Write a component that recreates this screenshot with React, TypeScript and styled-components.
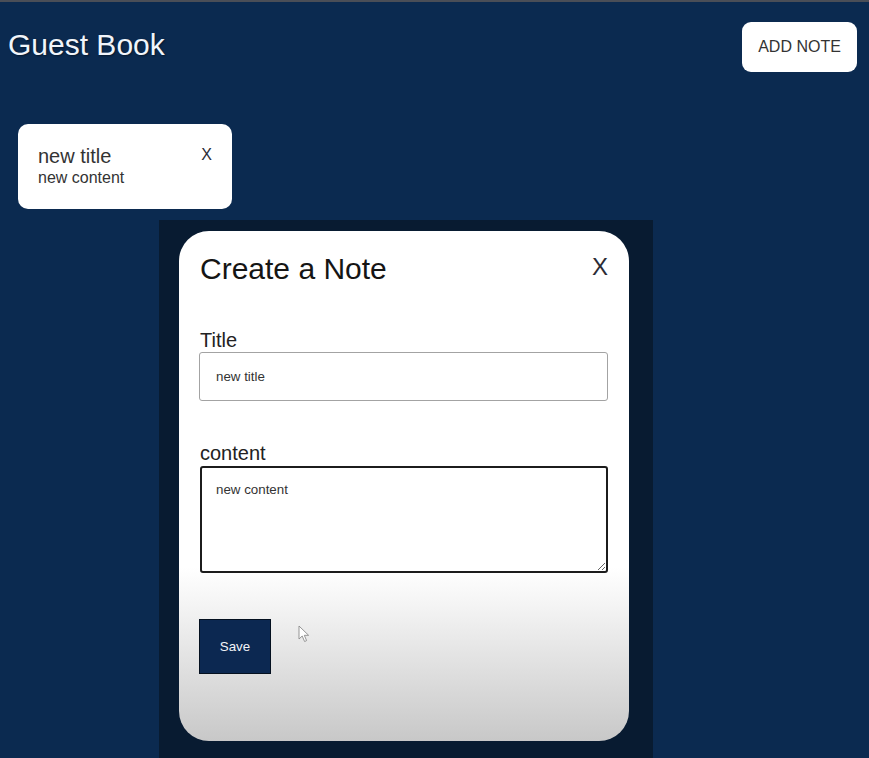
import React from "react";
import styled, { createGlobalStyle } from "styled-components";

const GlobalStyle = createGlobalStyle`
  html, body {
    margin: 0;
    padding: 0;
    background: #0b2a50;
    font-family: "Liberation Sans", Arial, sans-serif;
  }
  * { box-sizing: border-box; }
`;

const Page = styled.div`
  width: 869px;
  height: 758px;
  overflow: hidden;
  background: #0b2a50;
  display: flex;
  flex-direction: column;
`;

const TopBar = styled.div`
  height: 2px;
  background: #4a4e57;
  flex: none;
`;

const Header = styled.header`
  display: flex;
  justify-content: space-between;
  align-items: flex-start;
  padding: 20px 12px 0 8px;
`;

const Title = styled.h1`
  margin: 5px 0 0;
  font-size: 30px;
  line-height: 36px;
  font-weight: 400;
  color: #f1f5fb;
  text-shadow: 1px 1px 2px rgba(0, 0, 0, 0.45);
`;

const AddButton = styled.button`
  width: 115px;
  height: 50px;
  border: none;
  border-radius: 9px;
  background: #ffffff;
  color: #333333;
  font-family: "Liberation Sans", Arial, sans-serif;
  font-size: 16px;
  padding: 0;
  cursor: pointer;
`;

const NoteList = styled.section`
  display: flex;
  gap: 16px;
  margin-top: 52px;
  padding-left: 18px;
`;

const NoteCard = styled.article`
  width: 214px;
  height: 85px;
  background: #ffffff;
  border-radius: 10px;
  padding: 20px 20px 0 20px;
  display: flex;
  justify-content: space-between;
  align-items: flex-start;
  color: #333333;
`;

const NoteText = styled.div`
  display: flex;
  flex-direction: column;
`;

const NoteTitle = styled.div`
  font-size: 20px;
  line-height: 24px;
`;

const NoteBody = styled.div`
  font-size: 16px;
  line-height: 18px;
  margin-top: 1px;
`;

const CloseText = styled.span<{ $size: number; $lh: number; $offset?: number }>`
  font-size: ${(p) => p.$size}px;
  line-height: ${(p) => p.$lh}px;
  margin-top: ${(p) => p.$offset ?? 0}px;
  color: #2b2b35;
  cursor: pointer;
`;

const Backdrop = styled.div`
  margin: 11px 0 0 159px;
  width: 494px;
  height: 538px;
  background: #081b31;
  padding: 11px 24px 0 20px;
`;

const Modal = styled.div`
  position: relative;
  width: 450px;
  height: 510px;
  border-radius: 30px;
  background: linear-gradient(180deg, #ffffff 0%, #ffffff 66%, #f3f3f3 74%, #c8c8c8 100%);
  padding: 20px 21px 0 21px;
  display: flex;
  flex-direction: column;
`;

const ModalHeader = styled.div`
  display: flex;
  justify-content: space-between;
  align-items: flex-start;
`;

const ModalTitle = styled.h2`
  margin: 0;
  font-size: 30px;
  line-height: 36px;
  font-weight: 400;
  color: #151515;
`;

const FieldLabel = styled.label<{ $gap: number }>`
  display: block;
  margin-top: ${(p) => p.$gap}px;
  font-size: 20px;
  line-height: 24px;
  color: #222222;
`;

const TextInput = styled.input`
  display: block;
  width: 409px;
  height: 49px;
  margin-left: -1px;
  border: 1px solid #a3a3a3;
  border-radius: 3px;
  padding: 0 16px;
  font-family: "Liberation Sans", Arial, sans-serif;
  font-size: 13.333px;
  color: #333333;
  background: #ffffff;
  outline: none;
`;

const TextArea = styled.textarea`
  display: block;
  width: 408px;
  height: 107px;
  margin-top: 1px;
  border: 2px solid #1c1c1c;
  border-radius: 3px;
  padding: 14px 14px;
  font-family: "Liberation Sans", Arial, sans-serif;
  font-size: 13.333px;
  color: #333333;
  background: #ffffff;
  outline: none;
  resize: vertical;
`;

const SaveButton = styled.button`
  margin-top: 46px;
  margin-left: -1px;
  width: 72px;
  height: 55px;
  background: #0c2851;
  border: 1px solid #04101f;
  color: #f2f4f8;
  font-family: "Liberation Sans", Arial, sans-serif;
  font-size: 13.333px;
  padding: 0;
  cursor: pointer;
`;

const Pointer = styled.svg`
  position: absolute;
  left: 119px;
  top: 394px;
  width: 13px;
  height: 18px;
  pointer-events: none;
`;

export default function App() {
  return (
    <>
      <GlobalStyle />
      <Page>
        <TopBar />
        <Header>
          <Title>Guest Book</Title>
          <AddButton>ADD NOTE</AddButton>
        </Header>
        <NoteList>
          <NoteCard>
            <NoteText>
              <NoteTitle>new title</NoteTitle>
              <NoteBody>new content</NoteBody>
            </NoteText>
            <CloseText $size={16} $lh={24} $offset={-1}>X</CloseText>
          </NoteCard>
        </NoteList>
        <Backdrop>
          <Modal>
            <ModalHeader>
              <ModalTitle>Create a Note</ModalTitle>
              <CloseText $size={24} $lh={24} $offset={4}>X</CloseText>
            </ModalHeader>
            <FieldLabel $gap={41} htmlFor="note-title">Title</FieldLabel>
            <TextInput id="note-title" defaultValue="new title" />
            <FieldLabel $gap={40} htmlFor="note-content">content</FieldLabel>
            <TextArea id="note-content" defaultValue="new content" />
            <div>
              <SaveButton>Save</SaveButton>
            </div>
            <Pointer viewBox="0 0 13 18">
              <path
                d="M1 1 L1 14 L4.2 11 L6.6 16.5 L8.6 15.6 L6.3 10.3 L10.6 10.3 Z"
                fill="#ffffff"
                stroke="#8a8a8a"
                strokeWidth="0.9"
                strokeLinejoin="round"
              />
            </Pointer>
          </Modal>
        </Backdrop>
      </Page>
    </>
  );
}
